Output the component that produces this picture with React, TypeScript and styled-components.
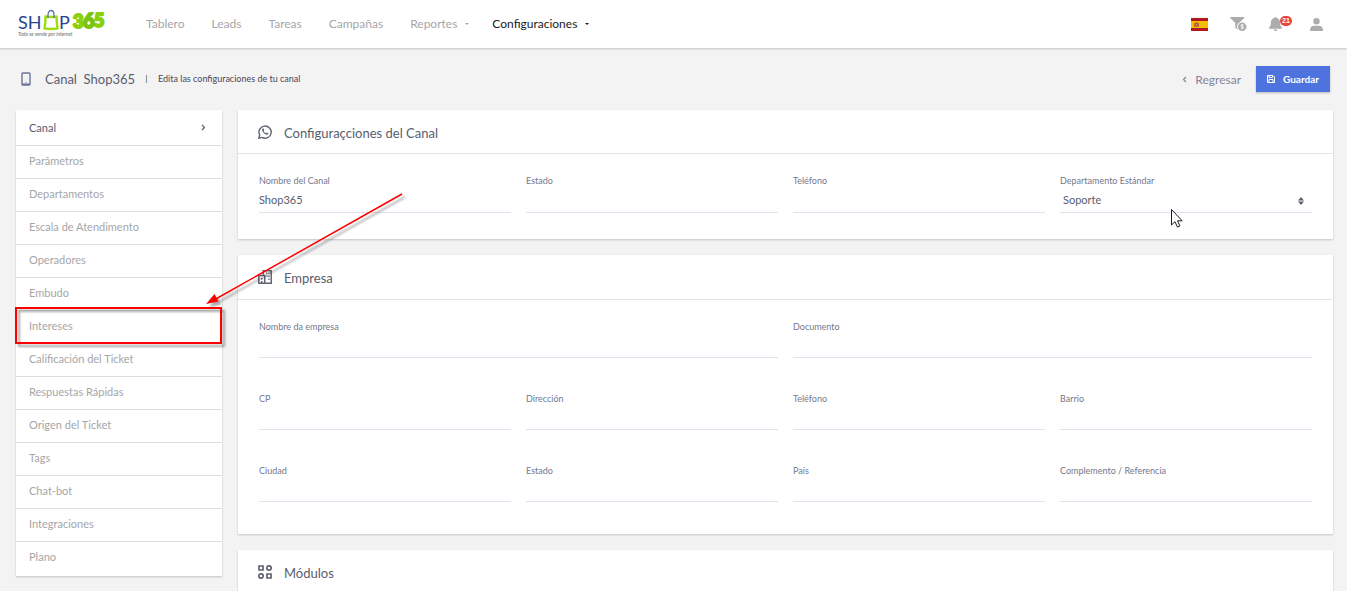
import React from 'react';
import styled, { createGlobalStyle, css } from 'styled-components';

const GlobalStyle = createGlobalStyle`
  *, *::before, *::after { box-sizing: border-box; }
  body {
    margin: 0;
    background: #f3f3f3;
    color: #595d6e;
    font-family: Lato, 'Open Sans', sans-serif;
    font-size: 12px;
  }
  a { color: inherit; text-decoration: none; }
`;

const raised = css`
  background: #fff;
  box-shadow: 0 1px 2px rgba(0, 0, 0, 0.2);
`;

const TopBar = styled.header`
  ${raised}
  display: flex;
  align-items: center;
  height: 48px;
  padding: 0 24px 0 16px;
`;

const LogoLink = styled.a`
  display: block;
  width: 94px;
  height: 32px;
  margin-right: 36px;
`;

const Nav = styled.nav`
  display: flex;
  align-items: center;
  gap: 27px;
`;

const NavLink = styled.a<{ $active?: boolean }>`
  display: flex;
  align-items: center;
  gap: 8px;
  line-height: 16px;
  color: ${(p) => (p.$active ? '#1b1b1f' : '#a6a6a8')};
`;

const Caret = styled.span`
  margin-right: -4px;
  border: 2px solid transparent;
  border-top-color: currentColor;
  border-bottom: 0;
`;

const Tools = styled.div`
  display: flex;
  align-items: center;
  gap: 22px;
  margin-left: auto;
`;

const ToolButton = styled.button<{ $badged?: boolean }>`
  position: relative;
  display: flex;
  padding: 0 ${(p) => (p.$badged ? 6 : 0)}px 0 0;
  border: 0;
  background: none;
  color: #acacac;
  cursor: pointer;
`;

const Badge = styled.span`
  position: absolute;
  top: -1px;
  left: 11px;
  width: 12px;
  height: 10px;
  border-radius: 5px;
  background: #e8453c;
  color: #fff;
  font-size: 7px;
  font-weight: 700;
  line-height: 10px;
  text-align: center;
`;

const SubHeader = styled.div`
  display: flex;
  align-items: center;
  height: 62px;
  padding: 0 17px 0 20px;
`;

const PageTitle = styled.h1`
  margin: 0 11px 0 13px;
  font-size: 13px;
  font-weight: 400;
  line-height: 20px;
  white-space: pre;
`;

const Divider = styled.span`
  width: 1px;
  height: 8px;
  background: #8a8c99;
`;

const Subtitle = styled.p`
  margin: 0 0 0 11px;
  font-size: 9px;
  line-height: 12px;
  color: #48465b;
`;

const BackLink = styled.a`
  display: flex;
  align-items: center;
  gap: 8px;
  margin-left: auto;
  color: #83869a;
`;

const SaveButton = styled.button`
  display: flex;
  align-items: center;
  gap: 8px;
  height: 26px;
  margin-left: 15px;
  padding: 0 11px;
  border: 0;
  background: #4e73df;
  box-shadow: 0 1px 2px rgba(0, 0, 0, 0.25);
  color: #fff;
  font: 700 10px/12px Lato, sans-serif;
  cursor: pointer;
`;

const Content = styled.div`
  display: grid;
  grid-template-columns: 206px minmax(0, 1fr);
  align-items: start;
  gap: 16px;
  padding: 0 14px 16px 16px;
`;

const Sidebar = styled.nav`
  ${raised}
`;

const MenuList = styled.ul`
  margin: 0;
  padding: 0;
  list-style: none;
`;

const MenuItem = styled.li`
  position: relative;
  border-bottom: 1px solid #dedede;
  &:first-child { padding-top: 3px; }
  &:last-child { padding-bottom: 2px; border-bottom: 0; }
`;

const MenuLink = styled.a<{ $active?: boolean }>`
  display: flex;
  align-items: center;
  justify-content: space-between;
  height: 32px;
  padding: 0 16px 4px 13px;
  font-size: 11px;
  color: ${(p) => (p.$active ? '#595d6e' : '#a6a6a8')};
`;

const Highlight = styled.span`
  position: absolute;
  inset: -4px 0 -1px -1px;
  z-index: 1;
  border: 2px solid #f00;
  filter: drop-shadow(3px 3px 1px rgba(0, 0, 0, 0.35));
  pointer-events: none;
`;

const Pointer = styled.svg`
  position: absolute;
  left: 184px;
  bottom: 26px;
  z-index: 2;
  filter: drop-shadow(3px 3px 1px rgba(0, 0, 0, 0.35));
  pointer-events: none;
`;

const Cards = styled.main`
  display: grid;
  gap: 16px;
`;

const Card = styled.section`
  ${raised}
`;

const CardHeader = styled.header<{ $tall?: boolean }>`
  display: flex;
  align-items: center;
  gap: 12px;
  height: ${(p) => (p.$tall ? 45 : 44)}px;
  padding: 0 20px;
  border-bottom: 1px solid #e3e3ee;
`;

const CardTitle = styled.h2`
  margin: 0;
  padding-top: 2px;
  font-size: 13px;
  font-weight: 400;
  line-height: 20px;
`;

const Fields = styled.div<{ $dense?: boolean }>`
  display: grid;
  grid-template-columns: repeat(4, minmax(0, 1fr));
  grid-auto-rows: ${(p) => (p.$dense ? 37 : 38)}px;
  gap: 35px 15px;
  padding: 21px 21px ${(p) => (p.$dense ? 32 : 26)}px;
`;

const FieldBox = styled.div<{ $wide?: boolean }>`
  position: relative;
  grid-column: span ${(p) => (p.$wide ? 2 : 1)};
  display: flex;
  flex-direction: column;
`;

const Label = styled.label`
  font-size: 9px;
  line-height: 12px;
  color: #74788d;
`;

const control = css`
  flex: 1;
  width: 100%;
  min-height: 0;
  border: 0;
  border-bottom: 1px solid #e2e2ee;
  border-radius: 0;
  background: transparent;
  color: #595d6e;
  font: 11px/16px Lato, sans-serif;
  outline: 0;
`;

const Input = styled.input`
  ${control}
  padding: 0;
`;

const Select = styled.select`
  ${control}
  padding: 1px 0 0 3px;
  appearance: none;
`;

const SelectArrows = styled.svg`
  position: absolute;
  right: 8px;
  bottom: 8px;
  pointer-events: none;
`;

const Cursor = styled.svg`
  position: absolute;
  left: 110px;
  top: 33px;
  z-index: 3;
  pointer-events: none;
`;

const Logo = () => (
  <svg width="94" height="32" viewBox="0 0 94 32" role="img" aria-label="Shop 365">
    <g fill="#27458f" fontFamily="Lato, sans-serif" fontSize="18">
      <text x="2" y="21">SH</text>
      <text x="43" y="21">P</text>
    </g>
    <path d="M29.500 8.500c4 .8 7 .8 11 0 .3 4 .3 8 1 12-4.500.6-8.500.6-13 0 .8-4 1.200-8 1-12z" fill="#fff" stroke="#9fdc10" strokeWidth="2.400" strokeLinejoin="round" />
    <path d="M32 10V7c0-6 6-6 6 0v3" fill="none" stroke="#5572a5" strokeWidth="1.300" />
    <g fill="#8bd00c" stroke="#8bd00c" strokeWidth="2" strokeLinejoin="round" fontFamily="Lato, sans-serif" fontSize="18" fontWeight="900">
      <text x="57" y="20">3</text>
      <text x="78" y="19">5</text>
      <text x="67" y="20" fontSize="20" fill="#7ac414" stroke="#7ac414">6</text>
    </g>
    <text x="2" y="28" fill="#6b6b6b" fontFamily="Lato, sans-serif" fontSize="5" fontStyle="italic">Todo se vende por internet</text>
  </svg>
);

const Flag = () => (
  <svg width="17" height="13" viewBox="0 0 17 13" role="img" aria-label="Español">
    <path fill="#b3161d" d="M0 0h17v13H0z" />
    <path fill="#f4bd00" d="M0 3h17v7H0z" />
    <path fill="#b8642a" d="M3 5h1v4H3zM7 5h1v4H7zM4 5l1.500-1L7 5v3.500L5.500 9 4 8.500z" />
    <path fill="#d8a080" d="M5 6h1v1H5z" />
  </svg>
);

const FunnelIcon = () => (
  <svg width="17" height="15" viewBox="0 0 17 15" fill="currentColor" aria-hidden="true">
    <path d="M.7 0h13c.6 0 .8.600.5 1L9.800 5.200A5 5 0 0 0 8 12.700L5.300 11V6L.2 1C-.1.600.1 0 .7 0z" />
    <circle cx="12.200" cy="9.700" r="4.300" />
    <path d="M13.600 8.200c-.8-.7-2.700-.6-2.700.4 0 1.200 2.700.7 2.700 1.900 0 1-1.900 1.200-2.900.4M12.200 7v5.400" fill="none" stroke="#fff" strokeWidth=".8" />
  </svg>
);

const BellIcon = () => (
  <svg width="13" height="14" viewBox="0 0 13 14" fill="currentColor" aria-hidden="true">
    <path d="M6.500 0c.6 0 1 .4 1 1 2.300.5 3.600 2.200 3.600 4.500 0 2.800.6 3.800 1.500 4.600.8.700.4 1.700-.6 1.700H1c-1 0-1.400-1-.6-1.700.9-.8 1.500-1.800 1.500-4.600C1.900 3.200 3.200 1.500 5.500 1c0-.6.4-1 1-1zM4.800 12.400h3.400c0 2-3.400 2-3.400 0z" />
  </svg>
);

const UserIcon = () => (
  <svg width="13" height="13" viewBox="0 0 13 13" fill="currentColor" aria-hidden="true">
    <circle cx="6.500" cy="3.200" r="3.200" />
    <path d="M0 13v-1.500C0 9 2 7.700 4.200 7.700h4.600C11 7.700 13 9 13 11.500V13z" />
  </svg>
);

const Chevron = ({ left }: { left?: boolean }) => (
  <svg width="5" height="7" viewBox="0 0 5 7" fill="none" stroke="currentColor" strokeWidth="1.200" aria-hidden="true">
    <path d={left ? 'M4 1 1.500 3.500 4 6' : 'M1 1l2.500 2.500L1 6'} />
  </svg>
);

const PhoneIcon = () => (
  <svg width="12" height="14" viewBox="0 0 12 14" aria-hidden="true">
    <rect x="2" y="1" width="8" height="12" rx="1" fill="none" stroke="#6a7199" strokeWidth="1.400" />
    <path d="M2 11.500h8V13H2z" fill="#6a7199" />
    <path d="M5.500 10h1v1h-1z" fill="#6a7199" />
  </svg>
);

const SaveIcon = () => (
  <svg width="8" height="8" viewBox="0 0 8 8" fill="none" stroke="#fff" aria-hidden="true">
    <path d="M.5.500h5.500L7.500 2v5.500h-7zM2 .5v2h3.500v-2M2 7.500V4.500h4v3" />
  </svg>
);

const WhatsappIcon = () => (
  <svg width="14" height="14" viewBox="0 0 14 14" aria-hidden="true">
    <path d="M.8 13.200l.9-3.200A6.100 6.100 0 1 1 4 12.400z" fill="none" stroke="#5f6373" strokeWidth="1.400" />
    <path d="M4.800 3.600c-1 .6-1 2 .3 3.700s3.200 2.800 4.500 2.200c.7-.3.900-.9.800-1.400L8.900 7.400l-.8.900C6.900 7.800 6.100 7 5.600 5.900l.6-.8-.6-1.500z" fill="#5f6373" />
  </svg>
);

const BuildingIcon = () => (
  <svg width="14" height="14" viewBox="0 0 14 14" fill="none" stroke="#5f6373" strokeWidth="1.500" aria-hidden="true">
    <path d="M5.300 4.500V.8h7.900v12.400H.8V5.500h5.900v7.700" />
    <path d="M3.800 8v1.500M3.800 11v2M8 3.300h1.300M10.300 3.300h1.300M8.500 6.300h1M10.300 6.300h1.300M10.300 9.300h1.300" />
  </svg>
);

const ModulesIcon = () => (
  <svg width="14" height="14" viewBox="0 0 14 14" fill="none" stroke="#5f6373" strokeWidth="1.700" aria-hidden="true">
    <path d="M1 1h4v4H1zM9 9h4v4H9z" />
    <circle cx="11" cy="3" r="2.200" />
    <circle cx="3" cy="11" r="2.200" />
  </svg>
);

const navItems = [
  { text: 'Tablero' },
  { text: 'Leads' },
  { text: 'Tareas' },
  { text: 'Campañas' },
  { text: 'Reportes', menu: true },
  { text: 'Configuraciones', menu: true, active: true },
];

const menuItems = [
  'Canal', 'Parâmetros', 'Departamentos', 'Escala de Atendimento', 'Operadores', 'Embudo', 'Intereses',
  'Calificación del Ticket', 'Respuestas Rápidas', 'Origen del Ticket', 'Tags', 'Chat-bot', 'Integraciones', 'Plano',
];

const companyFields = [
  { id: 'empresa', label: 'Nombre da empresa', wide: true },
  { id: 'documento', label: 'Documento', wide: true },
  { id: 'cp', label: 'CP' },
  { id: 'direccion', label: 'Dirección' },
  { id: 'empresa-telefono', label: 'Teléfono' },
  { id: 'barrio', label: 'Barrio' },
  { id: 'ciudad', label: 'Ciudad' },
  { id: 'empresa-estado', label: 'Estado' },
  { id: 'pais', label: 'País' },
  { id: 'complemento', label: 'Complemento / Referencia' },
];

type FieldProps = { id: string; label: string; wide?: boolean; value?: string };

const Field = ({ id, label, wide, value }: FieldProps) => (
  <FieldBox $wide={wide}>
    <Label htmlFor={id}>{label}</Label>
    <Input id={id} type="text" defaultValue={value} />
  </FieldBox>
);

export default function App() {
  return (
    <>
      <GlobalStyle />
      <TopBar>
        <LogoLink href="#"><Logo /></LogoLink>
        <Nav>
          {navItems.map((item) => (
            <NavLink key={item.text} href="#" $active={item.active}>
              {item.text}
              {item.menu && <Caret />}
            </NavLink>
          ))}
        </Nav>
        <Tools>
          <ToolButton aria-label="Idioma"><Flag /></ToolButton>
          <ToolButton aria-label="Embudo de ventas"><FunnelIcon /></ToolButton>
          <ToolButton $badged aria-label="Notificaciones"><BellIcon /><Badge>21</Badge></ToolButton>
          <ToolButton aria-label="Usuario"><UserIcon /></ToolButton>
        </Tools>
      </TopBar>

      <SubHeader>
        <PhoneIcon />
        <PageTitle>{'Canal  Shop365'}</PageTitle>
        <Divider />
        <Subtitle>Edita las configuraciones de tu canal</Subtitle>
        <BackLink href="#"><Chevron left />Regresar</BackLink>
        <SaveButton type="button"><SaveIcon />Guardar</SaveButton>
      </SubHeader>

      <Content>
        <Sidebar>
          <MenuList>
            {menuItems.map((text, i) => (
              <MenuItem key={text}>
                <MenuLink href="#" $active={i === 0}>
                  {text}
                  {i === 0 && <Chevron />}
                </MenuLink>
                {text === 'Intereses' && (
                  <>
                    <Highlight />
                    <Pointer width="210" height="130" viewBox="0 0 210 130" aria-hidden="true">
                      <path d="M202 7 14 113" stroke="#f00" strokeWidth="1.500" />
                      <path d="M6 117l8.500-10 4 7.500z" fill="#f00" />
                    </Pointer>
                  </>
                )}
              </MenuItem>
            ))}
          </MenuList>
        </Sidebar>

        <Cards>
          <Card>
            <CardHeader>
              <WhatsappIcon />
              <CardTitle>Configuraçciones del Canal</CardTitle>
            </CardHeader>
            <Fields>
              <Field id="canal" label="Nombre del Canal" value="Shop365" />
              <Field id="estado" label="Estado" />
              <Field id="telefono" label="Teléfono" />
              <FieldBox>
                <Label htmlFor="departamento">Departamento Estándar</Label>
                <Select id="departamento" defaultValue="Soporte">
                  <option>Soporte</option>
                </Select>
                <SelectArrows width="6" height="8" viewBox="0 0 6 8" fill="#595d6e" aria-hidden="true">
                  <path d="M3 0l3 3.400H0zM3 8l3-3.400H0z" />
                </SelectArrows>
                <Cursor width="14" height="21" viewBox="0 0 14 21" aria-hidden="true">
                  <path d="M1.500 1.500v15.500l3.500-3.300 2.400 5.400 2.500-1.100-2.400-5.200h4.700z" fill="#fff" stroke="#1b1b26" />
                </Cursor>
              </FieldBox>
            </Fields>
          </Card>

          <Card>
            <CardHeader $tall>
              <BuildingIcon />
              <CardTitle>Empresa</CardTitle>
            </CardHeader>
            <Fields $dense>
              {companyFields.map((field) => <Field key={field.id} {...field} />)}
            </Fields>
          </Card>

          <Card>
            <CardHeader $tall>
              <ModulesIcon />
              <CardTitle>Módulos</CardTitle>
            </CardHeader>
          </Card>
        </Cards>
      </Content>
    </>
  );
}
